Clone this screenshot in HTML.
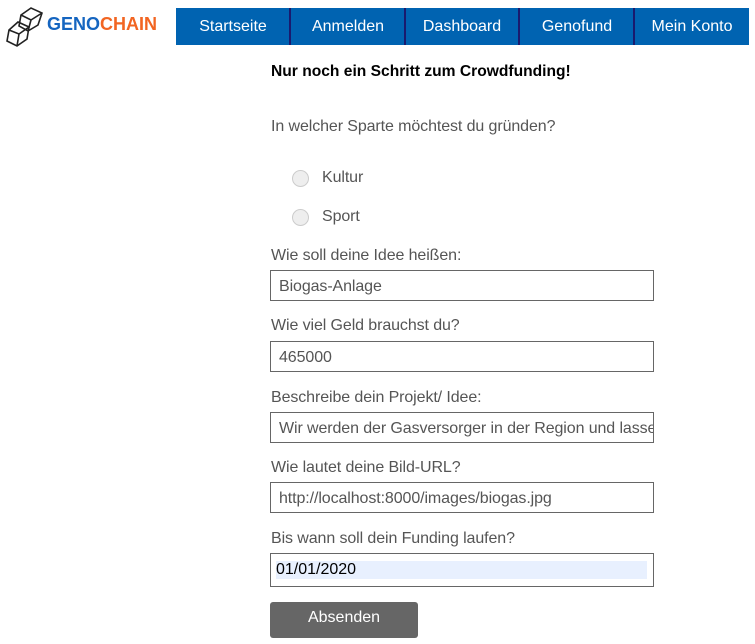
<!DOCTYPE html>
<html><head><meta charset="utf-8"><style>
body{margin:0;width:755px;height:644px;background:#fff;font-family:"Liberation Sans",Arial,sans-serif;position:relative;overflow:hidden}
.a{position:absolute}
.nav{top:8px;height:37px;background:#0063b1;color:#fff;font-size:16px;line-height:37px;text-align:center}
.sep{top:8px;height:37px;width:2px;background:#1a1a6e}
.lbl{left:271px;font-size:16px;color:#555;letter-spacing:-0.1px}
.inp{left:270px;height:31px;border:1px solid #666;font-size:16px;color:#555;line-height:31px;padding-left:8px;box-sizing:border-box;width:384px;overflow:hidden;white-space:nowrap;letter-spacing:-0.1px}
.rad{left:292px;width:17px;height:17px;border-radius:50%;border:1px solid #ccc;background:#eee;box-sizing:border-box}
</style></head><body>
<svg class="a" style="left:5px;top:5px" width="42" height="42" viewBox="0 0 42 42" fill="none" stroke="#222" stroke-width="1.6">
<path d="M16 10 L26 3 L37 8 L33 20 L23 26 L14 21 Z M16 10 L26 15 L37 8 M26 15 L23 26"/>
<path d="M4 25 L13 17 L24 22 L22 34 L12 41 L2 36 Z M4 25 L14 29 L24 22 M14 29 L12 41"/>
</svg>
<div class="a" style="left:47px;top:14px;font-size:18px;font-weight:bold"><span style="color:#1565c0">GENO</span><span style="color:#f26522">CHAIN</span></div>
<div class="a nav" style="left:176px;width:573px"></div>
<div class="a nav" style="left:176px;width:114px">Startseite</div>
<div class="a nav" style="left:291px;width:114px">Anmelden</div>
<div class="a nav" style="left:405px;width:114px">Dashboard</div>
<div class="a nav" style="left:520px;width:114px">Genofund</div>
<div class="a nav" style="left:635px;width:114px">Mein Konto</div>
<div class="a sep" style="left:289px"></div>
<div class="a sep" style="left:404px"></div>
<div class="a sep" style="left:518px"></div>
<div class="a sep" style="left:633px"></div>
<div class="a" style="left:271px;top:63px;font-size:15.6px;font-weight:bold;color:#000">Nur noch ein Schritt zum Crowdfunding!</div>
<div class="a lbl" style="top:118px">In welcher Sparte möchtest du gründen?</div>
<div class="a rad" style="top:170px"></div><div class="a lbl" style="left:322px;top:169px">Kultur</div>
<div class="a rad" style="top:209px"></div><div class="a lbl" style="left:322px;top:208px">Sport</div>
<div class="a lbl" style="top:247px">Wie soll deine Idee heißen:</div>
<div class="a inp" style="top:270px">Biogas-Anlage</div>
<div class="a lbl" style="top:317px">Wie viel Geld brauchst du?</div>
<div class="a inp" style="top:341px">465000</div>
<div class="a lbl" style="top:389px">Beschreibe dein Projekt/ Idee:</div>
<div class="a inp" style="top:412px">Wir werden der Gasversorger in der Region und lasse</div>
<div class="a lbl" style="top:459px">Wie lautet deine Bild-URL?</div>
<div class="a inp" style="top:482px">http://localhost:8000/images/biogas.jpg</div>
<div class="a lbl" style="top:530px">Bis wann soll dein Funding laufen?</div>
<div class="a inp" style="top:553px;height:34px"></div>
<div class="a" style="left:276px;top:561px;width:371px;height:18px;background:#e8f0fe;font-size:16px;line-height:18px;color:#000">01/01/2020</div>
<div class="a" style="left:270px;top:602px;width:148px;height:36px;background:#666;border-radius:3px;color:#fff;font-size:16px;text-align:center;line-height:32px">Absenden</div>
</body></html>
